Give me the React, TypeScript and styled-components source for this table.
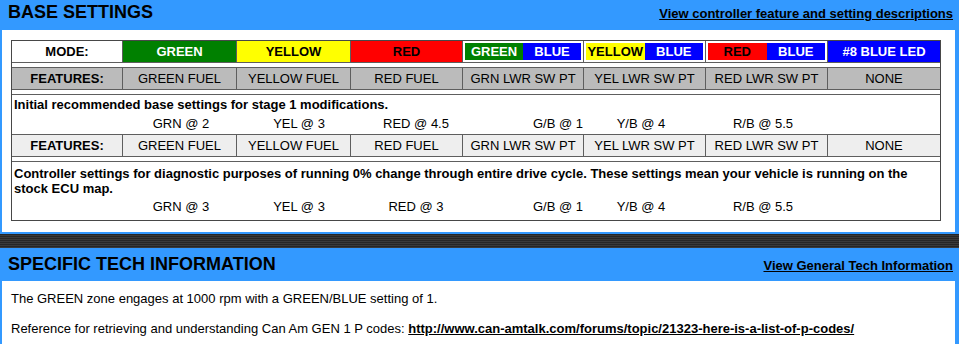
import React from "react";
import styled, { createGlobalStyle } from "styled-components";

const BLUE = "#3399ff";
const LINE = "#5e5e5e";

const Global = createGlobalStyle`
  html, body { margin: 0; padding: 0; background: #fff; }
  body {
    font-family: "Liberation Sans", Arial, Helvetica, sans-serif;
    color: #000;
    font-size: 13px;
  }
  * { box-sizing: border-box; }
`;

const Page = styled.div`
  width: 959px;
`;

const Section = styled.section<{ $bottom?: number }>`
  background: ${BLUE};
  padding: 0 4px ${(p) => p.$bottom ?? 0}px 2px;
`;

const Header = styled.header<{ $h: number; $top: number }>`
  display: flex;
  justify-content: space-between;
  align-items: flex-start;
  height: ${(p) => p.$h}px;
  padding: ${(p) => p.$top}px 2px 0 6px;
`;

const Title = styled.h1`
  margin: 0;
  font-size: 18px;
  line-height: 24px;
  font-weight: bold;
  color: #000;
`;

const HeaderLink = styled.a`
  margin-top: 1.5px;
  font-size: 13px;
  line-height: 24px;
  font-weight: bold;
  color: #000;
  text-decoration: underline;
  cursor: pointer;
`;

const Panel = styled.div<{ $pad: string }>`
  background: #fff;
  padding: ${(p) => p.$pad};
`;

const Table = styled.div`
  width: 930px;
  border: 1px solid #484848;
  background: #fff;
`;

const COLS = "111px 114px 114px 112px 121px 122px 122px 112px";

const Row = styled.div<{ $bg?: string; $last?: boolean }>`
  display: grid;
  grid-template-columns: ${COLS};
  height: 22px;
  background: ${(p) => p.$bg ?? "#fff"};
  border-bottom: ${(p) => (p.$last ? "none" : `1px solid ${LINE}`)};
`;

const Cell = styled.div<{ $bg?: string; $fg?: string; $bold?: boolean }>`
  display: flex;
  align-items: center;
  justify-content: center;
  background: ${(p) => p.$bg ?? "transparent"};
  color: ${(p) => p.$fg ?? "#000"};
  font-weight: ${(p) => (p.$bold ? "bold" : "normal")};
  font-size: 13px;
  white-space: nowrap;
  border-right: 1px solid ${LINE};
  &:last-child { border-right: none; }
`;

const SplitCell = styled.div`
  display: flex;
  padding: 2px;
  background: #fff;
  border-right: 1px solid ${LINE};
  &:last-child { border-right: none; }
`;

const Half = styled.span<{ $bg: string; $fg: string }>`
  flex: 1;
  display: flex;
  align-items: center;
  justify-content: center;
  background: ${(p) => p.$bg};
  color: ${(p) => p.$fg};
  font-weight: bold;
  font-size: 13px;
  white-space: nowrap;
`;

const Separator = styled.div`
  height: 5px;
  border-bottom: 1px solid ${LINE};
`;

const TextBlock = styled.div<{ $top: number; $h: number; $last?: boolean }>`
  height: ${(p) => p.$h}px;
  padding: ${(p) => p.$top}px 2px 0 2px;
  border-bottom: ${(p) => (p.$last ? "none" : `1px solid ${LINE}`)};
`;

const Note = styled.div`
  font-weight: bold;
  font-size: 13px;
  line-height: 15px;
`;

const Values = styled.div<{ $h: number }>`
  display: grid;
  grid-template-columns: 108px 118px 118px 116px 36px 96px 70px 174px;
  height: ${(p) => p.$h}px;
  align-items: center;
`;

const Value = styled.span`
  text-align: center;
  font-size: 13px;
  white-space: nowrap;
`;

const Stripe = styled.div`
  height: 14px;
  background: repeating-linear-gradient(
    to bottom,
    #262626 0px,
    #262626 1px,
    #3a3a3a 1px,
    #3a3a3a 2px
  );
`;

const Para = styled.p`
  margin: 0 0 14px 0;
  font-size: 13px;
  line-height: 16px;
`;

const InlineLink = styled.a`
  font-weight: bold;
  color: #000;
  text-decoration: underline;
  cursor: pointer;
`;

type Mode =
  | { kind: "solid"; label: string; bg: string; fg: string }
  | { kind: "split"; a: string; abg: string; afg: string; b: string; bbg: string; bfg: string };

const modes: Mode[] = [
  { kind: "solid", label: "GREEN", bg: "#008000", fg: "#fff" },
  { kind: "solid", label: "YELLOW", bg: "#ffff00", fg: "#000" },
  { kind: "solid", label: "RED", bg: "#ff0000", fg: "#000" },
  { kind: "split", a: "GREEN", abg: "#008000", afg: "#fff", b: "BLUE", bbg: "#0000ff", bfg: "#fff" },
  { kind: "split", a: "YELLOW", abg: "#ffff00", afg: "#000", b: "BLUE", bbg: "#0000ff", bfg: "#fff" },
  { kind: "split", a: "RED", abg: "#ff0000", afg: "#000", b: "BLUE", bbg: "#0000ff", bfg: "#fff" },
  { kind: "solid", label: "#8 BLUE LED", bg: "#0000ff", fg: "#fff" },
];

const features = [
  "GREEN FUEL",
  "YELLOW FUEL",
  "RED FUEL",
  "GRN LWR SW PT",
  "YEL LWR SW PT",
  "RED LWR SW PT",
  "NONE",
];

const FeatureRow = ({ bg }: { bg: string }) => (
  <Row $bg={bg}>
    <Cell $bold>FEATURES:</Cell>
    {features.map((f) => (
      <Cell key={f}>{f}</Cell>
    ))}
  </Row>
);

const ValueRow = ({ vals, h }: { vals: string[]; h: number }) => (
  <Values $h={h}>
    <span />
    <Value>{vals[0]}</Value>
    <Value>{vals[1]}</Value>
    <Value>{vals[2]}</Value>
    <span />
    <Value>{vals[3]}</Value>
    <Value>{vals[4]}</Value>
    <Value>{vals[5]}</Value>
  </Values>
);

export default function App() {
  return (
    <Page>
      <Global />
      <Section $bottom={2}>
        <Header $h={30} $top={0}>
          <Title>BASE SETTINGS</Title>
          <HeaderLink>View controller feature and setting descriptions</HeaderLink>
        </Header>
        <Panel $pad="10px 14px 11px 9px">
          <Table>
            <Row>
              <Cell $bold>MODE:</Cell>
              {modes.map((m, i) =>
                m.kind === "solid" ? (
                  <Cell key={i} $bg={m.bg} $fg={m.fg} $bold>
                    {m.label}
                  </Cell>
                ) : (
                  <SplitCell key={i}>
                    <Half $bg={m.abg} $fg={m.afg}>{m.a}</Half>
                    <Half $bg={m.bbg} $fg={m.bfg}>{m.b}</Half>
                  </SplitCell>
                )
              )}
            </Row>
            <Separator />
            <FeatureRow bg="#bbbbbb" />
            <Separator />
            <TextBlock $top={2} $h={40}>
              <Note>Initial recommended base settings for stage 1 modifications.</Note>
              <ValueRow h={22} vals={["GRN @ 2", "YEL @ 3", "RED @ 4.5", "G/B @ 1", "Y/B @ 4", "R/B @ 5.5"]} />
            </TextBlock>
            <FeatureRow bg="#eeeeee" />
            <Separator />
            <TextBlock $top={4} $h={58} $last>
              <Note>
                Controller settings for diagnostic purposes of running 0% change through entire drive cycle. These
                settings mean your vehicle is running on the
                <br />
                stock ECU map.
              </Note>
              <ValueRow h={20} vals={["GRN @ 3", "YEL @ 3", "RED @ 3", "G/B @ 1", "Y/B @ 4", "R/B @ 5.5"]} />
            </TextBlock>
          </Table>
        </Panel>
      </Section>
      <Stripe />
      <Section>
        <Header $h={33} $top={4}>
          <Title>SPECIFIC TECH INFORMATION</Title>
          <HeaderLink>View General Tech Information</HeaderLink>
        </Header>
        <Panel $pad="10px 9px 20px 9px">
          <Para>The GREEN zone engages at 1000 rpm with a GREEN/BLUE setting of 1.</Para>
          <Para>
            Reference for retrieving and understanding Can Am GEN 1 P codes:{" "}
            <InlineLink>http://www.can-amtalk.com/forums/topic/21323-here-is-a-list-of-p-codes/</InlineLink>
          </Para>
        </Panel>
      </Section>
    </Page>
  );
}
